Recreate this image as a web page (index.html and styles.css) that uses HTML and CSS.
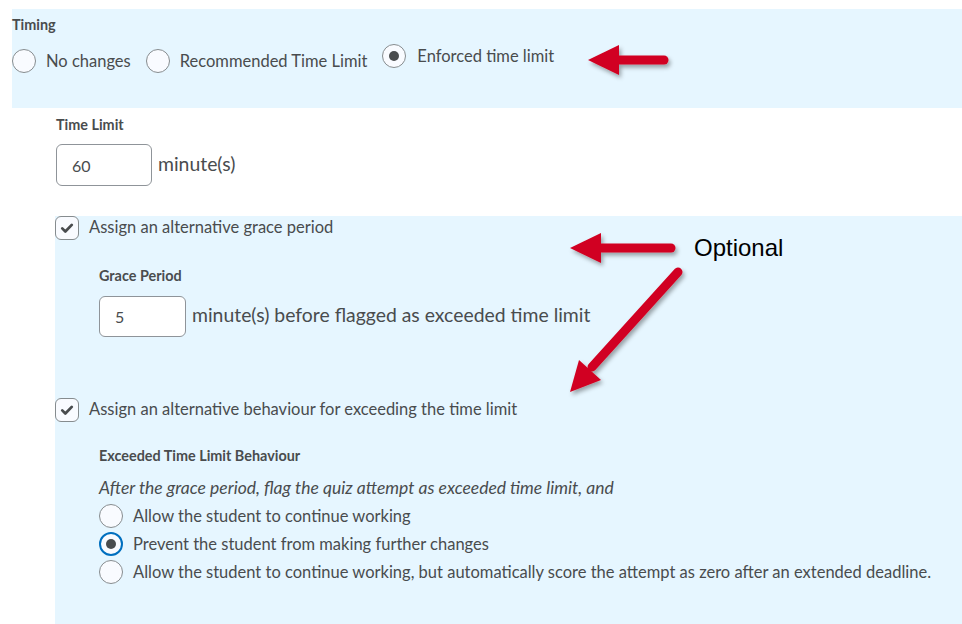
FILE: index.html
```html
<!DOCTYPE html>
<html>
<head>
<meta charset="utf-8">
<link rel="stylesheet" href="styles.css">
</head>
<body>
<div class="page">
  <section class="timing">
    <div class="legend">Timing</div>
    <div class="radio-row">
      <label class="opt"><span class="radio"></span><span>No changes</span></label>
      <label class="opt"><span class="radio"></span><span>Recommended Time Limit</span></label>
      <label class="opt opt-raised"><span class="radio on"></span><span>Enforced time limit</span></label>
    </div>
  </section>

  <section class="limit">
    <div class="legend">Time Limit</div>
    <div class="input-row">
      <div class="input input-wide">60</div>
      <span class="unit">minute(s)</span>
    </div>
  </section>

  <section class="options">
    <label class="check-row"><span class="checkbox"><svg viewBox="0 0 24 24" width="24" height="24"><path d="M6.8 12.4l3.4 3.4L17.2 8.6" fill="none" stroke="#494c4e" stroke-width="3" stroke-linecap="round" stroke-linejoin="round"/></svg></span><span>Assign an alternative grace period</span></label>
    <div class="sub grace">
      <div class="legend">Grace Period</div>
      <div class="input-row">
        <div class="input input-narrow">5</div>
        <span class="unit">minute(s) before flagged as exceeded time limit</span>
      </div>
    </div>

    <label class="check-row check-second"><span class="checkbox"><svg viewBox="0 0 24 24" width="24" height="24"><path d="M6.8 12.4l3.4 3.4L17.2 8.6" fill="none" stroke="#494c4e" stroke-width="3" stroke-linecap="round" stroke-linejoin="round"/></svg></span><span>Assign an alternative behaviour for exceeding the time limit</span></label>
    <div class="sub behaviour">
      <div class="legend">Exceeded Time Limit Behaviour</div>
      <p class="hint">After the grace period, flag the quiz attempt as exceeded time limit, and</p>
      <div class="radio-list">
        <label class="opt"><span class="radio"></span><span>Allow the student to continue working</span></label>
        <label class="opt"><span class="radio on focus"></span><span>Prevent the student from making further changes</span></label>
        <label class="opt"><span class="radio"></span><span>Allow the student to continue working, but automatically score the attempt as zero after an extended deadline.</span></label>
      </div>
    </div>
  </section>

  <div class="note">Optional</div>

  <svg class="arrows" width="962" height="624" viewBox="0 0 962 624">
    <defs>
      <filter id="sh" x="-20%" y="-20%" width="140%" height="140%">
        <feDropShadow dx="2" dy="3" stdDeviation="2" flood-color="#000" flood-opacity="0.35"/>
      </filter>
    </defs>
    <g filter="url(#sh)" fill="#d10020" stroke="#d10020">
      <line x1="612" y1="60" x2="664" y2="60" stroke-width="9" stroke-linecap="round"/>
      <polygon points="588,60 619,45 619,75" stroke="none"/>
      <line x1="595" y1="248" x2="671" y2="248" stroke-width="9" stroke-linecap="round"/>
      <polygon points="570,248 601,233 601,263" stroke="none"/>
      <line x1="678" y1="272" x2="592" y2="367" stroke-width="9" stroke-linecap="round"/>
      <polygon points="570,392 579,360 601,380" stroke="none"/>
    </g>
  </svg>
</div>
</body>
</html>
```

FILE: styles.css
```css
html, body {
  margin: 0;
  padding: 0;
  background: #ffffff;
}

.page {
  position: relative;
  width: 962px;
  height: 624px;
  overflow: hidden;
  font-family: Lato, "Noto Sans", sans-serif;
  color: #494c4e;
  font-size: 16.5px;
}

.legend {
  font-size: 14.4px;
  font-weight: 700;
  line-height: 16px;
  color: #494c4e;
}

.timing {
  margin: 9px 0 0 12px;
  height: 99px;
  box-sizing: border-box;
  padding-top: 8px;
  background: #e6f6ff;
}

.radio-row {
  display: flex;
  align-items: flex-start;
  margin-top: 16px;
}

.opt {
  display: flex;
  align-items: center;
  gap: 10px;
  line-height: 24px;
}

.radio-row .opt {
  margin-right: 15px;
}

.radio-row .opt-raised {
  margin-top: -5px;
}

.radio-row .opt-raised .radio + span {
  margin-left: 1px;
}

.radio {
  flex: none;
  width: 24px;
  height: 24px;
  box-sizing: border-box;
  border-radius: 50%;
  border: 1px solid #868c8f;
  background: #f9fbff;
  display: flex;
  align-items: center;
  justify-content: center;
}

.radio.on::after {
  content: "";
  width: 10px;
  height: 10px;
  border-radius: 50%;
  background: #494c4e;
}

.radio.focus {
  border: 2px solid #006fbf;
}

.limit {
  padding: 9px 0 0 56px;
}

.input-row {
  display: flex;
  align-items: center;
  gap: 6px;
  margin-top: 11px;
}

.input {
  box-sizing: border-box;
  border: 1px solid #8f9499;
  border-radius: 6px;
  background: #fff;
  padding-left: 15px;
  display: flex;
  align-items: center;
  font-size: 16px;
}

.input-wide {
  width: 96px;
  height: 42px;
}

.input-narrow {
  width: 87px;
  height: 41px;
}

.unit {
  font-size: 19.4px;
  line-height: 24px;
  margin-top: -3px;
}

.options {
  margin: 30px 0 0 55px;
  height: 408px;
  background: #e6f6ff;
}

.check-row {
  display: flex;
  align-items: flex-start;
  gap: 10px;
  line-height: 22px;
}

.checkbox {
  flex: none;
  width: 24px;
  height: 24px;
  box-sizing: border-box;
  border: 1px solid #868c8f;
  border-radius: 6px;
  background: #f9fbff;
  display: flex;
  align-items: center;
  justify-content: center;
}

.checkbox svg {
  display: block;
}

.sub {
  padding-left: 44px;
}

.grace {
  padding-top: 28px;
}

.grace .input-row {
  margin-top: 12px;
}

.check-second {
  margin-top: 61px;
}

.behaviour {
  padding-top: 26px;
}

.hint {
  margin: 12px 0 0;
  font-style: italic;
  font-size: 17.5px;
  line-height: 24px;
}

.radio-list {
  display: flex;
  flex-direction: column;
  gap: 4px;
  margin-top: 4px;
}

.note {
  position: absolute;
  left: 694px;
  top: 234px;
  font-family: "Liberation Sans", Arial, sans-serif;
  font-size: 24px;
  line-height: 28px;
  color: #000;
}

.arrows {
  position: absolute;
  left: 0;
  top: 0;
  pointer-events: none;
}
```
